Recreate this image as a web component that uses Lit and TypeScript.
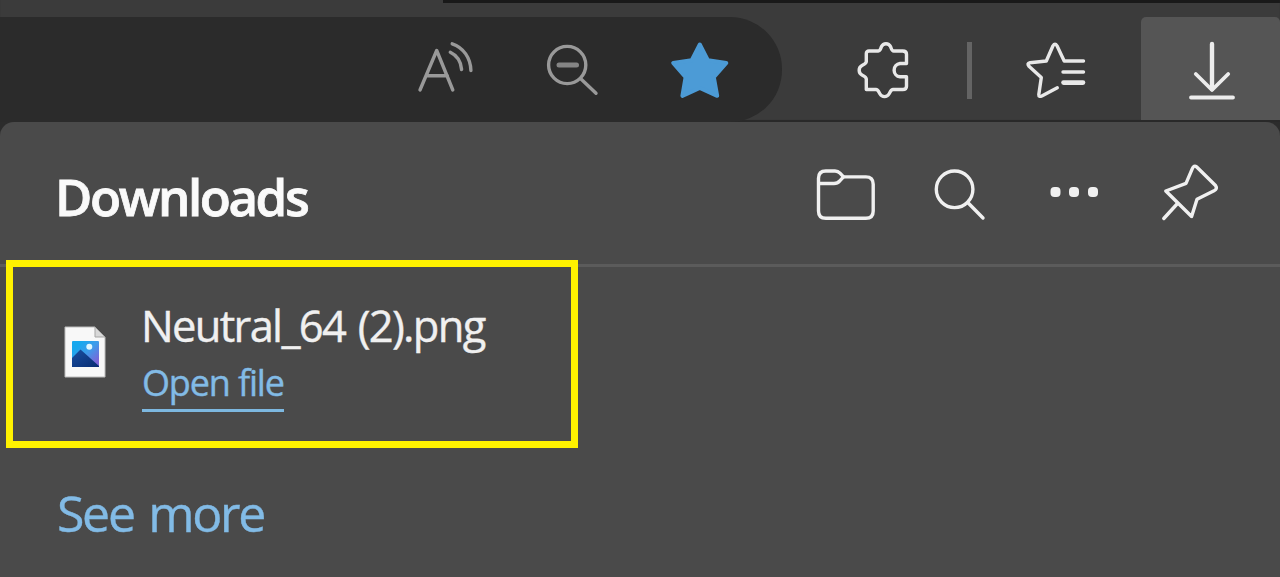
import { LitElement, html, css, svg } from 'lit';
import { customElement } from 'lit/decorators.js';

const icons = {
  readAloud: svg`
    <path d="M8 54 24.7 14.5 40.8 54M14 39.7H35.4" />
    <path d="M38.3 16.3C45 19.5 49 26 49.6 33.5" />
    <path d="M40.2 7.8C51.5 11.5 58.6 22 58.9 34.5" />`,
  zoomOut: svg`
    <circle cx="28.2" cy="29" r="18.6" />
    <path d="M41.5 42.5 57 57.3" />
    <path d="M20 29H37.5" stroke-width="5" stroke="#858585" />`,
  star: svg`
    <path d="M33.8 8.5 42 24.3 60.3 27 47.8 41.2 51.2 59.8 33.8 52 16.4 59.8 19.6 41.2 7.2 27 25.6 24.3Z" fill="currentColor" stroke-width="4" />`,
  puzzle: svg`
    <path d="M19 15H28.3C30.5 15 30.6 12.5 31.5 10.5A5 5 0 0 1 40.5 10.5C41.4 12.5 41.6 15 43.7 15H52.7Q56.5 15 56.5 18.3V27.5H50A6.7 6.7 0 0 0 50 40.8H56.5V50.2Q56.5 53.5 52.7 53.5H43C41 53.5 40.2 56 39 58A5.2 5.2 0 0 1 30 58C28.8 56 28 53.5 26 53.5H16.3V43C16.3 41 14 40 12 39A5.4 5.4 0 0 1 12 29.5C14 28.5 16.3 27.5 16.3 25.5V17.5Q16.3 15 19 15Z" />`,
  favorites: svg`
    <path d="M61.5 25H42.2L35 9.8Q33 6.5 31 9.8L24.3 25 8 26.7Q4.5 27.5 7 30.3L19.3 41.4 16.8 58.5Q16.7 61.3 19.8 60L35.3 51.8" />
    <path d="M41 36H61.5" />
    <path d="M41.5 46.6H61" stroke-width="4.6" />`,
  download: svg`
    <path d="M34 8V53" stroke-width="4.4" />
    <path d="M17.8 38 34 54 50.2 38M13 61.5H55" stroke-width="3.8" />`,
  folder: svg`
    <path d="M7.5 20.3V50Q7.5 57.3 14.8 57.3H54.9Q62.2 57.3 62.2 50V23.2Q62.2 15.9 54.9 15.9H32.5L29 12.2Q27 10 24 10H14.8Q7.5 10 7.5 17.3Z" />
    <path d="M8.5 22.5H23Q26.5 22.5 28.8 19.8L32.5 15.9" />`,
  search: svg`
    <circle cx="28.6" cy="28.3" r="18.3" />
    <path d="M42 41.8 57 57" />`,
  more: svg`
    <g fill="currentColor" stroke="none">
      <rect x="9.5" y="26" width="10" height="10" rx="4" />
      <rect x="28" y="26" width="10" height="10" rx="4" />
      <rect x="47" y="26" width="10" height="10" rx="4" />
    </g>`,
  pin: svg`
    <path d="M40.5 5.8 59.5 24.5Q61.8 27.8 58 29.8L41 38.2 35.6 55.5 9.8 30 30 22.3 36.2 7.8Q38 3.8 40.5 5.8Z" />
    <path d="M21.5 42.5 7.8 57.5" />`,
};

@customElement('app-root')
export class AppRoot extends LitElement {
  static styles = css`
    :host {
      display: flex;
      flex-direction: column;
      width: 1280px;
      height: 577px;
      overflow: hidden;
      background-color: #2c2c2c;
      font-family: 'Open Sans', 'Noto Sans', sans-serif;
      color: #f0f0f0;
    }
    .toolbar {
      flex: none;
      display: flex;
      align-items: flex-start;
      height: 122px;
      box-sizing: border-box;
      padding-top: 17px;
      background: linear-gradient(#191919, #191919) 443px 0 / 837px 3px no-repeat, #3b3b3b;
      box-shadow: inset 0 -2px 1px #292929;
    }
    .icon {
      flex: none;
      display: block;
      width: 68px;
      height: 68px;
      fill: none;
      stroke: currentColor;
      stroke-width: 3.4;
      stroke-linecap: round;
      stroke-linejoin: round;
    }
    .address {
      display: flex;
      justify-content: flex-end;
      gap: 59px;
      width: 782px;
      height: 105px;
      box-sizing: border-box;
      padding: 19px 48px 0 0;
      border-radius: 0 52px 52px 0;
      background-color: #2b2b2b;
      color: #999;
    }
    .favorite {
      color: #4c9bd6;
    }
    .actions {
      flex: 1;
      display: flex;
      padding: 19px 0 0 68px;
      color: #e8e8e8;
    }
    .divider {
      width: 5px;
      height: 57px;
      margin: 6px 50px 0 49px;
      background-color: #646464;
    }
    .download {
      display: flex;
      width: 139px;
      height: 103px;
      box-sizing: border-box;
      padding: 19px 0 0 37px;
      border-radius: 5px 5px 0 0;
      background-color: #555;
      color: #ececec;
    }
    .panel {
      flex: 1;
      display: flex;
      flex-direction: column;
      align-items: flex-start;
      border-radius: 14px 14px 0 0;
      background-color: #4a4a4a;
    }
    .header {
      display: flex;
      align-items: flex-start;
      justify-content: space-between;
      width: 100%;
      height: 145px;
      box-sizing: border-box;
      padding: 36px 56px 0 57px;
      border-bottom: 3px solid #5b5b5b;
    }
    .title {
      margin: 0 0 0 -2px;
      font-size: 51px;
      line-height: 76px;
      font-weight: 600;
      letter-spacing: -2.4px;
      color: #fafafa;
      -webkit-text-stroke: 0.8px currentColor;
    }
    .tools {
      display: flex;
      gap: 47px;
      padding-top: 3px;
    }
    .item {
      display: flex;
      align-items: flex-start;
      width: 572px;
      height: 188px;
      box-sizing: border-box;
      margin: -7px 0 0 6px;
      padding: 29px 0 0 51px;
      border: 7px solid #fff200;
    }
    .file-icon {
      flex: none;
      width: 42px;
      height: 52px;
      margin: 30px 35px 0 0;
    }
    .name {
      font-size: 43.5px;
      line-height: 60px;
      letter-spacing: -1.7px;
      word-spacing: 3px;
      white-space: nowrap;
      -webkit-text-stroke: 0.4px currentColor;
    }
    .open {
      display: inline-block;
      height: 53px;
      margin-left: 1px;
      border-bottom: 3px solid #7db8e0;
      font-size: 36px;
      line-height: 53px;
      letter-spacing: -1.15px;
      white-space: nowrap;
      color: #82bbe6;
      text-decoration: none;
      -webkit-text-stroke: 0.4px currentColor;
    }
    .more {
      margin: 30px 0 0 57px;
      font-size: 50px;
      line-height: 70px;
      letter-spacing: -2.3px;
      word-spacing: 4px;
      color: #82bbe6;
      text-decoration: none;
      white-space: nowrap;
      -webkit-text-stroke: 0.4px currentColor;
    }
  `;

  icon(name: keyof typeof icons, extra = '') {
    return html`<svg class="icon ${extra}" viewBox="0 0 68 68">${icons[name]}</svg>`;
  }

  render() {
    return html`
      <div class="toolbar">
        <div class="address">
          ${this.icon('readAloud')} ${this.icon('zoomOut')} ${this.icon('star', 'favorite')}
        </div>
        <div class="actions">
          ${this.icon('puzzle')}
          <div class="divider"></div>
          ${this.icon('favorites')}
        </div>
        <div class="download">${this.icon('download')}</div>
      </div>
      <div class="panel">
        <div class="header">
          <h1 class="title">Downloads</h1>
          <div class="tools">
            ${this.icon('folder')} ${this.icon('search')} ${this.icon('more')} ${this.icon('pin')}
          </div>
        </div>
        <div class="item">
          <svg class="file-icon" viewBox="0 0 42 52">
            <defs>
              <linearGradient id="sky" x1="0" y1="0" x2="1" y2="1">
                <stop offset="0.2" stop-color="#18a8ee" />
                <stop offset="0.5" stop-color="#3f9bea" />
                <stop offset="0.85" stop-color="#7a66d8" />
              </linearGradient>
              <linearGradient id="hill" x1="0" y1="0" x2="1" y2="1">
                <stop offset="0" stop-color="#1a4fa0" />
                <stop offset="1" stop-color="#082c72" />
              </linearGradient>
            </defs>
            <path d="M1 1H31L41 11V51H1Z" fill="#f8f8f8" stroke="#bdbdbd" />
            <path d="M31 1V11H41Z" fill="#d8d8d8" stroke="#a5a5a5" />
            <rect x="8" y="15" width="27" height="26" rx="1" fill="url(#sky)" />
            <path d="M8 32 16.5 23.5 35 40V41H8Z" fill="url(#hill)" />
            <circle cx="25.3" cy="20.7" r="3" fill="#dff7ff" />
          </svg>
          <div>
            <div class="name">Neutral_64 (2).png</div>
            <a class="open">Open file</a>
          </div>
        </div>
        <a class="more">See more</a>
      </div>
    `;
  }
}
